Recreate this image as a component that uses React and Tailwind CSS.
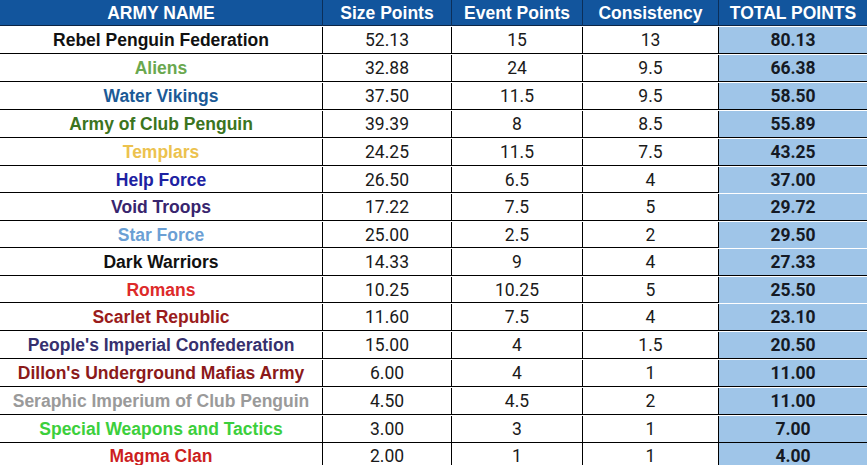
import React from 'react';

const armies = [
  { name: 'Rebel Penguin Federation', color: 'text-[#111111]', size: '52.13', event: '15', cons: '13', total: '80.13' },
  { name: 'Aliens', color: 'text-[#6aa84f]', size: '32.88', event: '24', cons: '9.5', total: '66.38' },
  { name: 'Water Vikings', color: 'text-[#1c5a96]', size: '37.50', event: '11.5', cons: '9.5', total: '58.50' },
  { name: 'Army of Club Penguin', color: 'text-[#3b7420]', size: '39.39', event: '8', cons: '8.5', total: '55.89' },
  { name: 'Templars', color: 'text-[#ecc24e]', size: '24.25', event: '11.5', cons: '7.5', total: '43.25' },
  { name: 'Help Force', color: 'text-[#1d22a2]', size: '26.50', event: '6.5', cons: '4', total: '37.00' },
  { name: 'Void Troops', color: 'text-[#38256e]', size: '17.22', event: '7.5', cons: '5', total: '29.72' },
  { name: 'Star Force', color: 'text-[#6b9fd4]', size: '25.00', event: '2.5', cons: '2', total: '29.50' },
  { name: 'Dark Warriors', color: 'text-[#111111]', size: '14.33', event: '9', cons: '4', total: '27.33' },
  { name: 'Romans', color: 'text-[#dd2a2a]', size: '10.25', event: '10.25', cons: '5', total: '25.50' },
  { name: 'Scarlet Republic', color: 'text-[#9a1c1c]', size: '11.60', event: '7.5', cons: '4', total: '23.10' },
  { name: "People's Imperial Confederation", color: 'text-[#36306e]', size: '15.00', event: '4', cons: '1.5', total: '20.50' },
  { name: "Dillon's Underground Mafias Army", color: 'text-[#8b1a1a]', size: '6.00', event: '4', cons: '1', total: '11.00' },
  { name: 'Seraphic Imperium of Club Penguin', color: 'text-[#9a9a9a]', size: '4.50', event: '4.5', cons: '2', total: '11.00' },
  { name: 'Special Weapons and Tactics', color: 'text-[#3ccf3c]', size: '3.00', event: '3', cons: '1', total: '7.00' },
  { name: 'Magma Clan', color: 'text-[#cc1f1f]', size: '2.00', event: '1', cons: '1', total: '4.00' },
];

// rows are not all the same height in the sheet screenshot; the last one is cut by the crop
const rowHeights = [
  'h-[28px] pt-[1px]', 'h-[28px] pt-[1px]', 'h-[28px] pt-[1px]', 'h-[28px] pt-[1px]',
  'h-[28px] pt-[1px]', 'h-[27px] pt-[1px]', 'h-[28px] pt-[1px]', 'h-[27px] pt-[1px]',
  'h-[28px] pt-[1px]', 'h-[27px] pt-[1px]', 'h-[28px] pt-[1px]', 'h-[28px] pt-[1px]',
  'h-[28px] pt-[1px]', 'h-[28px] pt-[1px]', 'h-[28px] pt-[1px]', 'h-[22px]',
];

const cols = 'grid grid-cols-[323px_129px_131px_136px_148px]';

export default function App() {
  return (
    <div className="w-[867px] h-[465px] overflow-hidden bg-white">
      {/* Header */}
      <div className={`${cols} h-[26px] bg-[#12559d] border-b border-[#0b2444] text-white font-bold text-[17.5px] font-['Liberation_Sans',Arial,sans-serif]`}>
        <div className="flex items-center justify-center border-r border-[#0b2f5a]">ARMY NAME</div>
        <div className="flex items-center justify-center border-r border-[#0b2f5a]">Size Points</div>
        <div className="flex items-center justify-center border-r border-[#0b2f5a]">Event Points</div>
        <div className="flex items-center justify-center border-r border-[#0b2f5a]">Consistency</div>
        <div className="flex items-center justify-center">TOTAL POINTS</div>
      </div>

      {armies.map((a, i) => (
        <div key={a.name} className={`${cols} ${rowHeights[i]} ${i < armies.length - 1 ? 'border-b border-black' : ''}`}>
          <div className={`flex items-center justify-center border-r border-black font-bold text-[17.5px] font-['Liberation_Sans',Arial,sans-serif] ${a.color}`}>
            {a.name}
          </div>
          <div className="flex items-center justify-center border-r border-black text-[17.5px] text-[#1a1a1a] font-['Roboto',sans-serif]">
            {a.size}
          </div>
          <div className="flex items-center justify-center border-r border-black text-[17.5px] text-[#1a1a1a] font-['Roboto',sans-serif]">
            {a.event}
          </div>
          <div className="flex items-center justify-center border-r border-black text-[17.5px] text-[#1a1a1a] font-['Roboto',sans-serif]">
            {a.cons}
          </div>
          <div className="flex items-center justify-center bg-[#9fc5e8] font-bold text-[17.5px] text-[#151a24] font-['Roboto',sans-serif]">
            {a.total}
          </div>
        </div>
      ))}
    </div>
  );
}
